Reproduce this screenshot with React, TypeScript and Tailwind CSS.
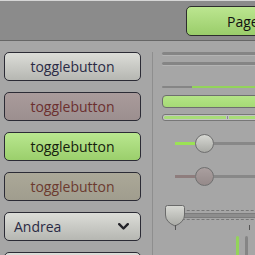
import React from "react";

function Toggle({ cls, text }: { cls: string; text: string }) {
  return (
    <div
      className={`h-[29px] w-[137px] shrink-0 rounded-[5px] border border-[#2b2b35] flex items-center justify-center text-[14px] ${cls}`}
    >
      {text}
    </div>
  );
}

export default function App() {
  return (
    <div
      className="w-[255px] h-[255px] overflow-hidden bg-[#a6a6a6] flex flex-col"
      style={{ fontFamily: '"Open Sans", "Noto Sans", sans-serif' }}
    >
      {/* toolbar */}
      <div className="h-[41px] shrink-0 border-t border-t-[#d6d6d6] border-b border-b-[#666666] bg-[#8b8b8b] flex items-start pt-[5px] pl-[186px]">
        <div className="h-[30px] w-[110px] shrink-0 rounded-[5px] border border-[#2d2d2d] bg-gradient-to-b from-[#bce690] to-[#9acd6a] flex items-center pl-[40px] text-[14px] text-[#111111] whitespace-nowrap">
          Page 1
        </div>
      </div>

      <div className="flex flex-1 min-h-0">
        {/* left column */}
        <div className="flex flex-col gap-[11px] pt-[11px] pl-[4px] w-[152px] shrink-0">
          <Toggle cls="bg-gradient-to-b from-[#dcddd8] to-[#b6b7b2] text-[#2a2a44]" text="togglebutton" />
          <Toggle cls="bg-gradient-to-b from-[#a99b9b] to-[#9c8f8f] text-[#6b2f2f]" text="togglebutton" />
          <Toggle cls="bg-gradient-to-b from-[#b9e78f] to-[#9bcf6c] text-[#15200c]" text="togglebutton" />
          <Toggle cls="bg-gradient-to-b from-[#aba898] to-[#a09d8e] text-[#6b3a2f]" text="togglebutton" />
          <div className="h-[29px] w-[137px] shrink-0 rounded-[5px] border border-[#2b2b35] bg-gradient-to-b from-[#dcddd8] to-[#b6b7b2] flex items-center justify-between pl-[9px] pr-[11px] text-[14px] text-[#2a2a44]">
            <span>Andrea</span>
            <svg width="11" height="7" viewBox="0 0 11 7">
              <path d="M1.2 1.2 L5.5 5.5 L9.8 1.2" fill="none" stroke="#222228" strokeWidth="2.4" strokeLinecap="round" strokeLinejoin="round" />
            </svg>
          </div>
          <Toggle cls="bg-gradient-to-b from-[#dcddd8] to-[#b6b7b2] text-[#2a2a44]" text="togglebutton" />
        </div>

        {/* separator */}
        <div className="w-px shrink-0 bg-[#8e8e8e] mt-[11px]" />

        {/* right column */}
        <div className="flex flex-col pt-[11px] pl-[9px] w-[140px] shrink-0">
          <div className="h-[3px] rounded-full bg-[#858585] shadow-[0_1px_0_#b4b4b4]" />
          <div className="h-[3px] mt-[7px] rounded-full bg-[#858585] shadow-[0_1px_0_#b4b4b4]" />
          <div className="h-[3px] mt-[21px] rounded-full bg-[#858585] flex">
            <div className="w-[30px]" />
            <div className="flex-1 bg-[#93d45a]" />
          </div>
          <div className="h-[13px] mt-[7px] rounded-[4px] border border-[#6e6e6e] bg-gradient-to-b from-[#b4e486] to-[#a6da76]" />
          <div className="h-[8px] mt-[6px] rounded-[3px] border border-[#777777] bg-[#c4c4c4] p-px flex gap-px">
            <div className="w-[62px] rounded-l-[2px] bg-[#a8dc78]" />
            <div className="w-px bg-[#8a8a8a]" />
            <div className="flex-1 bg-[#a8dc78]" />
          </div>

          {/* slider 1 */}
          <div className="h-[20px] mt-[13px] flex items-center">
            <div className="w-[13px] shrink-0" />
            <div className="w-[20px] h-[3px] bg-[#9be255] shrink-0" />
            <div className="w-[19px] h-[19px] rounded-full border border-[#6f6f6f] bg-gradient-to-b from-[#d7d8d3] to-[#a9aaa5] shrink-0" />
            <div className="flex-1 h-[3px] bg-[#888888]" />
          </div>
          {/* slider 2 */}
          <div className="h-[20px] mt-[14px] flex items-center">
            <div className="w-[13px] shrink-0" />
            <div className="w-[20px] h-[3px] bg-[#8e7d7d] shrink-0" />
            <div className="w-[19px] h-[19px] rounded-full border border-[#6f6f6f] bg-gradient-to-b from-[#aa9f9f] to-[#958a8a] shrink-0" />
            <div className="flex-1 h-[3px] bg-[#888888]" />
          </div>

          {/* scale slider */}
          <div className="relative h-[25px] mt-[19px]">
            <div className="absolute left-[10px] right-0 top-[5px] h-[10px] border-y border-dashed border-[#777777] flex items-center">
              <div className="w-full h-[5px] bg-[#8d8d8d] border-y border-[#7c7c7c]" />
            </div>
            <svg className="absolute left-[3px] top-0" width="20" height="22" viewBox="0 0 20 22">
              <defs>
                <linearGradient id="kg" x1="0" y1="0" x2="0" y2="1">
                  <stop offset="0" stopColor="#d8d9d4" />
                  <stop offset="1" stopColor="#a8a9a4" />
                </linearGradient>
              </defs>
              <path d="M2.5 0.5 H17.5 Q19.5 0.5 19.5 2.5 V10 Q19.5 17 10 21 Q0.5 17 0.5 10 V2.5 Q0.5 0.5 2.5 0.5 Z" fill="url(#kg)" stroke="#6a6a6a" strokeWidth="1" />
            </svg>
            <div className="absolute left-[13px] top-[20px] w-px h-[5px] bg-[#555555]" />
            <div className="absolute left-[87px] top-[20px] w-px h-[5px] bg-[#555555]" />
          </div>

          {/* vertical bars */}
          <div className="flex mt-[8px] pl-[74px] gap-[6px] h-[20px]">
            <div className="w-[3px] h-full bg-[#93d45a] rounded-t-full" />
            <div className="w-[3px] h-full bg-[#858585] rounded-t-full" />
          </div>
        </div>
      </div>
    </div>
  );
}
